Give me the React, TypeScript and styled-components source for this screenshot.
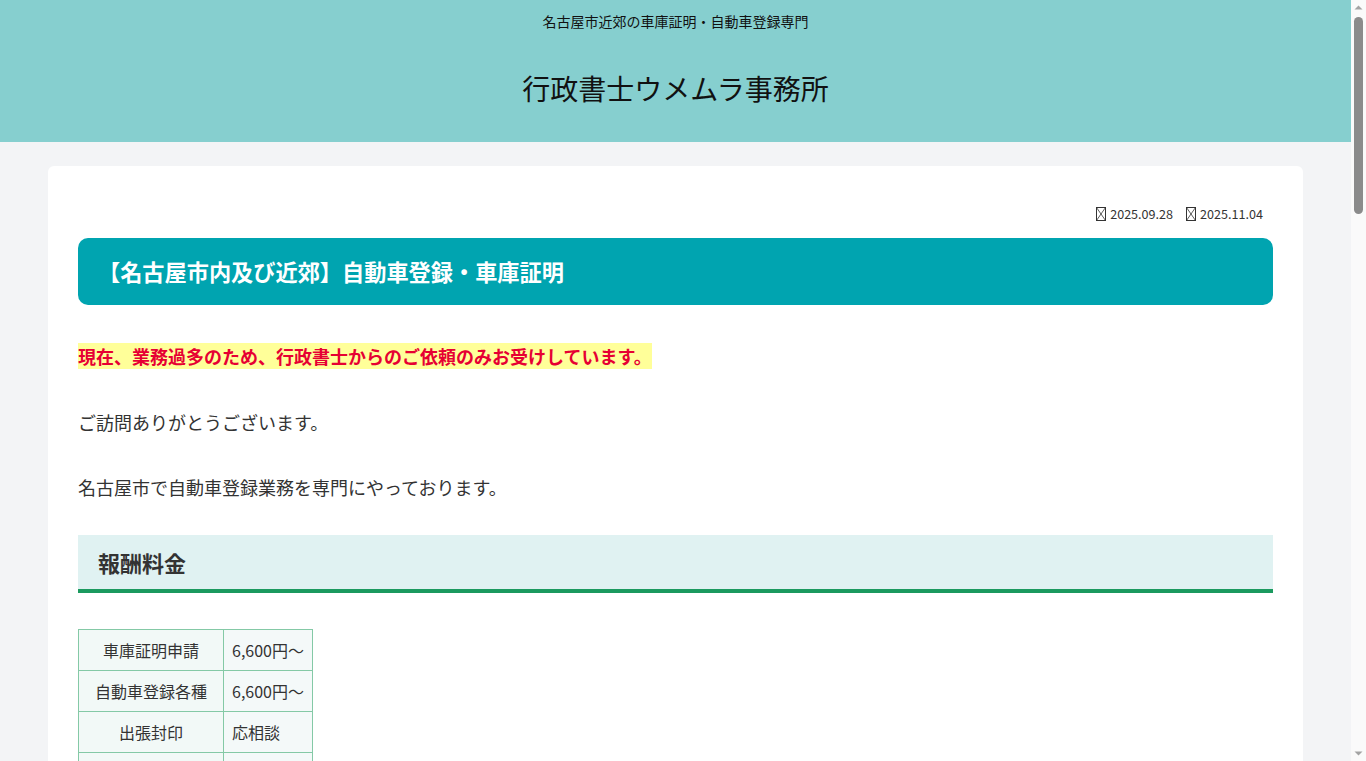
import React from 'react';
import styled, { createGlobalStyle } from 'styled-components';

const GlobalStyle = createGlobalStyle`
  html {
    background: #fafafa;
    padding-right: 15px;
  }
  html, body {
    margin: 0;
  }
  body {
    background: #f3f4f6;
    font-family: "Noto Sans CJK JP", "Noto Sans", sans-serif;
    color: #333;
  }
  * {
    box-sizing: border-box;
  }
`;

/* window scrollbar, drawn because the headless browser hides the real one */
const ScrollRail = styled.div`
  position: fixed;
  top: 0;
  right: 0;
  width: 15px;
  height: 100vh;
  background: #fafafa;
  display: flex;
  flex-direction: column;
  align-items: center;
`;

const ScrollThumb = styled.div`
  width: 9px;
  height: 197px;
  margin-top: 2px;
  border-radius: 5px;
  background: #8b8b8b;
`;

const ScrollArrow = styled.svg<{ $down?: boolean }>`
  width: 15px;
  height: 15px;
  flex: none;
  margin-top: ${p => (p.$down ? 'auto' : '0')};
`;

const Header = styled.header`
  background: #86cfcf;
  height: 142px;
  display: flex;
  flex-direction: column;
  align-items: center;
  color: #111;
`;

const Tagline = styled.div`
  font-size: 14px;
  line-height: 20px;
  margin-top: 11px;
`;

const SiteTitle = styled.div`
  font-size: 28px;
  line-height: 40px;
  margin-top: 37px;
`;

const Main = styled.main`
  padding: 24px 48px 40px;
`;

const Card = styled.article`
  background: #fff;
  border-radius: 6px;
  padding: 40px 30px 60px;
`;

const Meta = styled.div`
  display: flex;
  justify-content: flex-end;
  gap: 13px;
  padding-right: 10px;
  font-size: 12.6px;
  line-height: 16px;
  color: #333;
`;

const MetaItem = styled.span`
  display: inline-flex;
  align-items: center;
  gap: 4px;
`;

const Title = styled.h1`
  margin: 16px 0 0;
  background: #00a4b0;
  color: #fff;
  border-radius: 10px;
  font-size: 22.2px;
  font-weight: 700;
  line-height: 33px;
  padding: 17px 20px;
`;

const Para = styled.p<{ $first?: boolean }>`
  margin: ${p => (p.$first ? '36px' : '34px')} 0 0;
  font-size: 18px;
  line-height: 31.5px;
`;

const Alert = styled.span`
  background: #ffff99;
  color: #e60033;
  font-weight: 700;
`;

const Heading = styled.h2`
  margin: 31px 0 36px;
  background: #e0f2f2;
  border-bottom: 4px solid #1b9a5f;
  font-size: 22px;
  font-weight: 700;
  line-height: 33px;
  padding: 11px 20px 10px;
  color: #333;
`;

const Table = styled.table`
  border-collapse: collapse;
  font-size: 16px;
  line-height: 24px;
  margin-bottom: 40px;
`;

const Cell = styled.td<{ $label?: boolean }>`
  border: 1px solid #84c9a6;
  background: ${p => (p.$label ? '#f2f9f7' : '#f4f9f9')};
  padding: 8px ${p => (p.$label ? '16px' : '8px')};
  text-align: ${p => (p.$label ? 'center' : 'left')};
  white-space: nowrap;
`;

const List = styled.ul`
  margin: 34px 0 0;
  padding-left: 24px;
  font-size: 18px;
  line-height: 31.5px;
`;

const Footer = styled.footer`
  background: #86cfcf;
  color: #111;
  text-align: center;
  font-size: 14px;
  padding: 30px 0;
`;

const Tofu = () => (
  <svg width="10" height="14" viewBox="0 0 10 14" aria-hidden="true">
    <rect x="0.5" y="0.5" width="9" height="13" fill="none" stroke="#333" strokeWidth="1" />
    <path d="M0.5 0.5 L9.5 13.5 M9.5 0.5 L0.5 13.5" stroke="#333" strokeWidth="0.8" />
  </svg>
);

const fees: [string, string][] = [
  ['車庫証明申請', '6,600円〜'],
  ['自動車登録各種', '6,600円〜'],
  ['出張封印', '応相談'],
  ['希望番号申込', '3,300円〜'],
  ['書類作成のみ', '3,300円〜'],
];

export default function App() {
  return (
    <>
      <GlobalStyle />
      <Header>
        <Tagline>名古屋市近郊の車庫証明・自動車登録専門</Tagline>
        <SiteTitle>行政書士ウメムラ事務所</SiteTitle>
      </Header>
      <Main>
        <Card>
          <Meta>
            <MetaItem><Tofu />2025.09.28</MetaItem>
            <MetaItem><Tofu />2025.11.04</MetaItem>
          </Meta>
          <Title>【名古屋市内及び近郊】自動車登録・車庫証明</Title>
          <Para $first>
            <Alert>現在、業務過多のため、行政書士からのご依頼のみお受けしています。</Alert>
          </Para>
          <Para>ご訪問ありがとうございます。</Para>
          <Para>名古屋市で自動車登録業務を専門にやっております。</Para>

          <Heading>報酬料金</Heading>
          <Table>
            <tbody>
              {fees.map(([k, v]) => (
                <tr key={k}>
                  <Cell $label>{k}</Cell>
                  <Cell>{v}</Cell>
                </tr>
              ))}
            </tbody>
          </Table>
          <Para>※法定費用（印紙代・登録免許税・ナンバー代等）は別途となります。</Para>
          <Para>※ご依頼内容により料金が変わる場合がございます。お気軽にお問い合わせください。</Para>

          <Heading>対応地域</Heading>
          <Para>名古屋市全域、および近郊の市町村に対応しております。</Para>
          <List>
            <li>名古屋市（全16区）</li>
            <li>春日井市・小牧市・北名古屋市</li>
            <li>日進市・長久手市・豊明市</li>
            <li>清須市・あま市・大治町 ほか</li>
          </List>

          <Heading>ご依頼の流れ</Heading>
          <List>
            <li>お電話またはメールにてお問い合わせください。</li>
            <li>必要書類をご案内いたします。</li>
            <li>書類をお預かりし、申請を行います。</li>
            <li>完了後、書類・ナンバー等をお届けいたします。</li>
          </List>

          <Heading>事務所概要</Heading>
          <Table>
            <tbody>
              <tr><Cell $label>事務所名</Cell><Cell>行政書士ウメムラ事務所</Cell></tr>
              <tr><Cell $label>所在地</Cell><Cell>愛知県名古屋市</Cell></tr>
              <tr><Cell $label>営業時間</Cell><Cell>9:00〜18:00（土日祝休み）</Cell></tr>
              <tr><Cell $label>業務内容</Cell><Cell>車庫証明・自動車登録・出張封印</Cell></tr>
            </tbody>
          </Table>

          <Heading>お問い合わせ</Heading>
          <Para>ご不明な点がございましたら、お気軽にお問い合わせください。</Para>
          <Para>行政書士の先生からのご依頼をお待ちしております。</Para>
        </Card>
      </Main>
      <Footer>© 行政書士ウメムラ事務所</Footer>
      <ScrollRail aria-hidden="true">
        <ScrollArrow viewBox="0 0 15 15">
          <path d="M3.5 9.5 L7.5 5.5 L11.5 9.5 Z" fill="#a3a3a3" />
        </ScrollArrow>
        <ScrollThumb />
        <ScrollArrow viewBox="0 0 15 15" $down>
          <path d="M3.5 5.5 L7.5 9.5 L11.5 5.5 Z" fill="#a3a3a3" />
        </ScrollArrow>
      </ScrollRail>
    </>
  );
}
